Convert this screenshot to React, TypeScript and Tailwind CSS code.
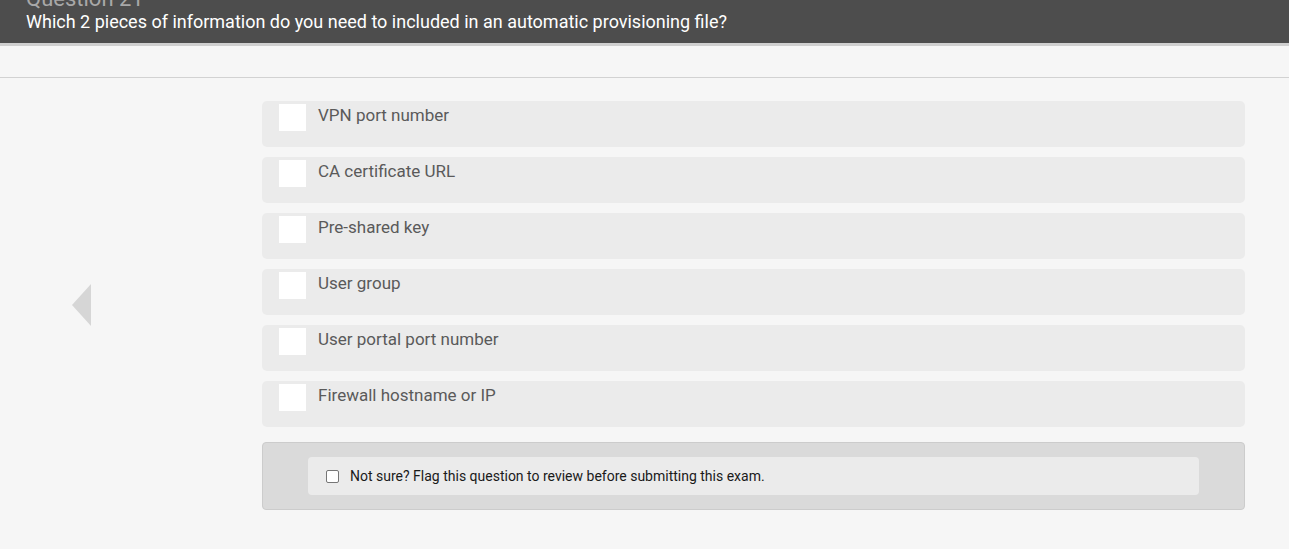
import React from "react";

const options = [
  "VPN port number",
  "CA certificate URL",
  "Pre-shared key",
  "User group",
  "User portal port number",
  "Firewall hostname or IP",
];

export default function App() {
  return (
    <div
      className="w-[1289px] h-[549px] overflow-hidden bg-[#f6f6f6]"
      style={{ fontFamily: "Roboto, 'Liberation Sans', sans-serif" }}
    >
      <div className="h-[43px] bg-[#4d4d4d] px-[26px] overflow-hidden relative">
        <div className="text-[22px] leading-[22px] text-[#a8a8a8] mt-[-12px]">Question 21</div>
        <div className="text-[18px] leading-[22px] text-white mt-[1px]">
          Which 2 pieces of information do you need to included in an automatic provisioning file?
        </div>
      </div>
      <div className="h-[3px] bg-[#cfcfcf]" />
      <div className="h-[32px] border-b border-[#d2d2d2]" />
      <div className="flex">
        <div className="w-[262px] flex justify-start">
          <div className="ml-[71px] mt-[206px]">
            <svg width="21" height="42" viewBox="0 0 21 42">
              <polygon points="20,0 20,42 1,21" fill="#d6d6d6" />
            </svg>
          </div>
        </div>
        <div className="w-[983px] pt-[23px] flex flex-col gap-[10px]">
          {options.map((o) => (
            <div key={o} className="h-[46px] bg-[#ebebeb] rounded-[5px] flex items-start pl-[17px] pt-[3px]">
              <div className="w-[27px] h-[27px] bg-white" />
              <div className="ml-[12px] text-[17px] leading-[22px] text-[#5a5a5a] mt-[0px]">{o}</div>
            </div>
          ))}
          <div className="mt-[5px] h-[68px] bg-[#dadada] border border-[#cccccc] rounded-[4px] pt-[14px] pl-[45px] pr-[45px]">
            <div className="h-[38px] bg-[#ebebeb] rounded-[4px] flex items-center pl-[18px]">
              <div className="w-[13px] h-[13px] border border-[#767676] rounded-[2px] bg-white" />
              <div className="ml-[11px] text-[14px] text-[#1a1a1a]">
                Not sure? Flag this question to review before submitting this exam.
              </div>
            </div>
          </div>
        </div>
      </div>
    </div>
  );
}
